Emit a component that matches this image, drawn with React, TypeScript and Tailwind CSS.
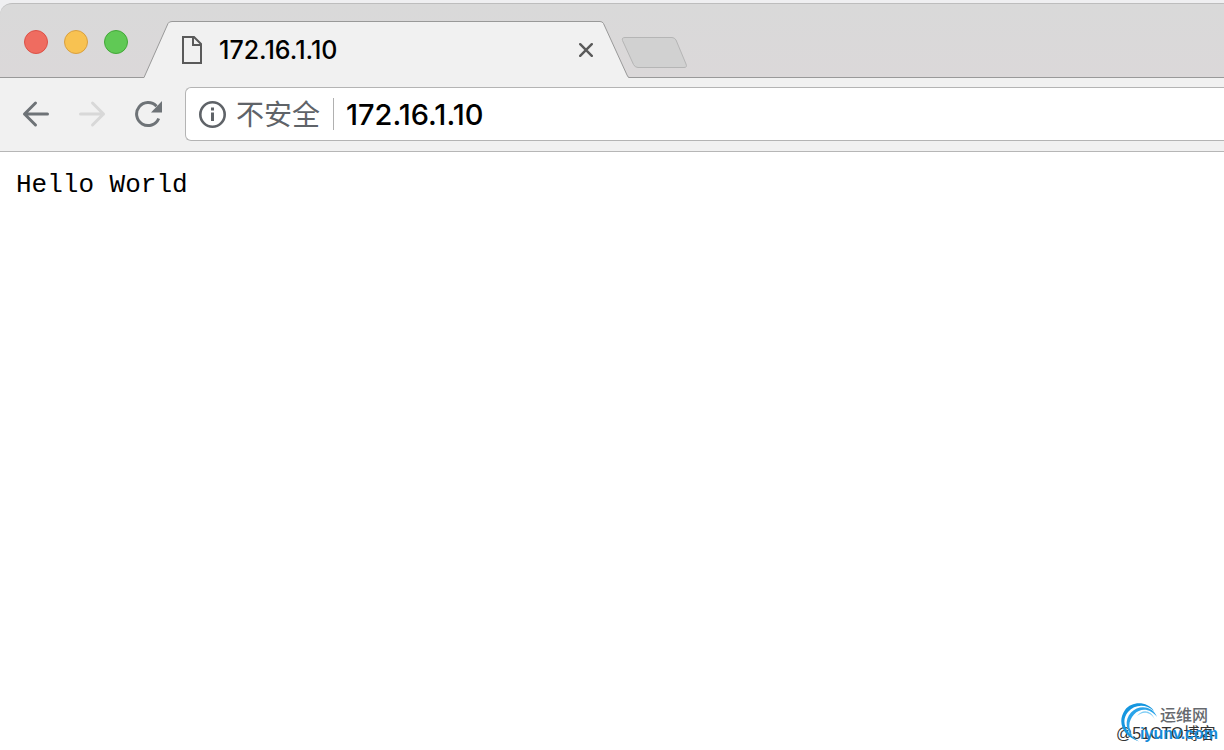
import React from 'react';

const TrafficLights: React.FC = () => (
  <div className="flex gap-4 self-start pl-6 pt-[26px]">
    <button aria-label="关闭窗口" className="size-6 rounded-full border border-[#dc5147] bg-[#ef6c60]" />
    <button aria-label="最小化" className="size-6 rounded-full border border-[#d9a040] bg-[#f8c251]" />
    <button aria-label="全屏" className="size-6 rounded-full border border-[#43a838] bg-[#60c955]" />
  </div>
);

const ActiveTab: React.FC<{ title: string }> = ({ title }) => (
  <div className="relative -mb-px ml-4 flex h-[57px] w-[485px] items-center pl-[37px] pr-9">
    {/* 标签页轮廓 */}
    <svg className="absolute inset-0" width="485" height="57" viewBox="0 0 485 57" fill="none">
      <path d="M0 56.5 L24 2.5 Q25 .5 28 .5 H456 Q458.5 .5 459.5 2.5 L483 54 Q484 56.5 485 56.5 V57 H0Z" fill="#f1f1f1" />
      <path d="M0 56.5 L24 2.5 Q25 .5 28 .5 H456 Q458.5 .5 459.5 2.5 L483 54 Q484 56.5 485 56.5" stroke="#999" />
    </svg>
    <svg className="relative" width="22" height="28" viewBox="0 0 22 28" fill="none" stroke="#5a5a5a" strokeWidth="2">
      <path d="M2 1h11l7 7v19H2z" />
      <path d="M12 1v8h8" />
    </svg>
    <span className="relative ml-4 flex-1 text-[25px] font-medium leading-8 text-black">{title}</span>
    <button aria-label="关闭标签页" className="relative">
      <svg width="14" height="14" viewBox="0 0 14 14" stroke="#5a5a5a" strokeWidth="2.4" strokeLinecap="round">
        <path d="M1.2 1.2l11.6 11.6M12.8 1.2L1.2 12.8" />
      </svg>
    </button>
  </div>
);

const NewTabButton: React.FC = () => (
  <button aria-label="新标签页" className="mb-2 -ml-2">
    <svg width="67" height="33" viewBox="0 0 67 33">
      <path
        d="M4 1.5H51Q53.5 1.5 55 4L65 28Q66.5 31.5 63 31.5H17Q14 31.5 12.5 28.5L1.5 4.5Q.5 1.5 4 1.5Z"
        fill="#d1d1d1"
        stroke="#b5b5b5"
      />
    </svg>
  </button>
);

const Toolbar: React.FC<{ address: string }> = ({ address }) => (
  <div className="flex h-[74px] items-center border-b border-[#b6b6b6] bg-[#f1f1f1] pb-0.5 pl-[22px]">
    <button aria-label="后退">
      <svg width="28" height="28" viewBox="0 0 28 28" fill="none" stroke="#6e7377" strokeWidth="3" strokeLinecap="round" strokeLinejoin="round">
        <path d="M25.5 14H2.5M13.5 3L2.5 14l11 11" />
      </svg>
    </button>
    <button aria-label="前进" disabled className="ml-7">
      <svg width="28" height="28" viewBox="0 0 28 28" fill="none" stroke="#d8d8d8" strokeWidth="3" strokeLinecap="round" strokeLinejoin="round">
        <path d="M2.5 14h23M14.5 3l11 11-11 11" />
      </svg>
    </button>
    <button aria-label="重新加载" className="ml-7">
      <svg width="28" height="28" viewBox="0 0 28 28" fill="none">
        <path d="M24.7 18.5A11.5 11.5 0 1 1 22.5 6.2" stroke="#6e7377" strokeWidth="3" />
        <path d="M28 1v11.5H17z" fill="#6e7377" />
      </svg>
    </button>
    <div className="ml-[23px] flex h-[54px] min-w-0 flex-1 items-center rounded-l-md border border-r-0 border-[#b4b4b4] bg-white pl-3">
      <svg width="28" height="28" viewBox="0 0 28 28" fill="none">
        <circle cx="14.5" cy="14.5" r="12.2" stroke="#5f6368" strokeWidth="2.6" />
        <path d="M14.5 12.5v8.5M14.5 7.5v3" stroke="#5f6368" strokeWidth="3" />
      </svg>
      <label htmlFor="address" className="ml-[10px] pt-0.5 text-[28px] leading-8 text-[#5f6368]">
        不安全
      </label>
      <span className="ml-[13px] h-8 w-px bg-[#b0b0b0]" />
      <input
        id="address"
        type="text"
        defaultValue={address}
        className="ml-3 h-10 min-w-0 flex-1 bg-transparent pt-0.5 text-[29px] font-medium text-black outline-none"
      />
    </div>
  </div>
);

const Watermark: React.FC = () => (
  <div className="absolute bottom-2 right-1 h-10 w-[104px] font-['Liberation_Sans','Noto_Sans_CJK_SC',sans-serif]">
    <span className="absolute bottom-0 left-0 whitespace-nowrap text-base leading-4 text-[#333]">@51CTO博客</span>
    <svg className="absolute left-1 top-0" width="40" height="40" viewBox="0 0 40 40">
      <path d="M34 9C27-1 12-1 5 8C-3 19 2 34 19 39.5C6 31 0 20 8 10C15 2 26 2 34 9Z" fill="#1596df" />
      <path d="M37 15C33 4 19 2 11 10.5C4 18 6 29 13 35C8 27 8 19 14 12.5C21 5 31 7 37 15Z" fill="#2aa4ea" />
      <path d="M35 18C31 9 22 9 17 14C22 7 31 7 35 18Z" fill="#7fcdf5" />
    </svg>
    <span className="absolute right-3 top-1 whitespace-nowrap text-base font-medium leading-5 text-[#66696e]">运维网</span>
    <span className="absolute bottom-0 right-0.5 whitespace-nowrap text-base font-bold leading-4 text-[#168bd8]">iyunv.com</span>
  </div>
);

const App: React.FC = () => (
  <div className="relative flex min-h-screen flex-col bg-white font-[Inter,'Noto_Sans_CJK_SC',sans-serif]">
    <header className="bg-[#efeff1] pt-[3px]">
      <div className="flex h-[75px] items-end rounded-tl-xl border-b border-t border-b-[#999] border-t-[#bdbdbd] bg-linear-to-b from-[#d9d9d9] to-[#dbd8d9]">
        <TrafficLights />
        <ActiveTab title="172.16.1.10" />
        <NewTabButton />
      </div>
      <Toolbar address="172.16.1.10" />
    </header>
    <main className="flex-1 px-4 pt-[17px]">
      <pre className="font-['Liberation_Mono',monospace] text-[26px] leading-8 text-black">Hello World</pre>
    </main>
    <Watermark />
  </div>
);

export default App;
